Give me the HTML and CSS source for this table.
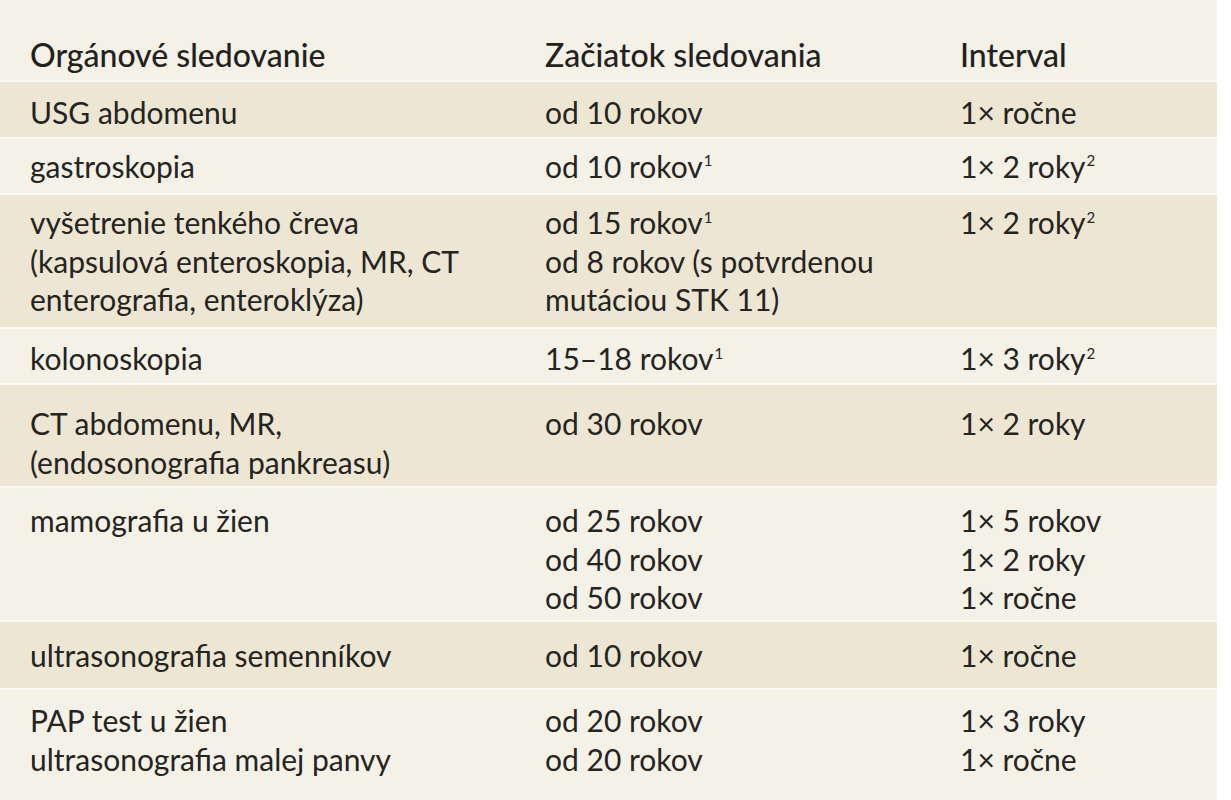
FILE: index.html
```html
<!DOCTYPE html>
<html lang="sk">
<head>
<meta charset="utf-8">
<title>Orgánové sledovanie</title>
<link rel="stylesheet" href="styles.css">
</head>
<body>
<div class="sheet">
<table class="plan">
  <colgroup>
    <col class="c1"><col class="c2"><col class="c3">
  </colgroup>
  <thead>
    <tr class="head">
      <th>Orgánové sledovanie</th>
      <th>Začiatok sledovania</th>
      <th>Interval</th>
    </tr>
  </thead>
  <tbody>
    <tr class="dark low">
      <td>USG abdomenu</td>
      <td>od 10 rokov</td>
      <td>1× ročne</td>
    </tr>
    <tr>
      <td>gastroskopia</td>
      <td>od 10 rokov<sup>1</sup></td>
      <td>1× 2 roky<sup>2</sup></td>
    </tr>
    <tr class="dark">
      <td>vyšetrenie tenkého čreva<br>(kapsulová enteroskopia, MR, CT<br>enterografia, enteroklýza)</td>
      <td>od 15 rokov<sup>1</sup><br>od 8 rokov (s potvrdenou<br>mutáciou STK 11)</td>
      <td>1× 2 roky<sup>2</sup></td>
    </tr>
    <tr class="low">
      <td>kolonoskopia</td>
      <td>15–18 rokov<sup>1</sup></td>
      <td>1× 3 roky<sup>2</sup></td>
    </tr>
    <tr class="dark ct">
      <td>CT abdomenu, MR,<br>(endosonografia pankreasu)</td>
      <td>od 30 rokov</td>
      <td>1× 2 roky</td>
    </tr>
    <tr class="mammo">
      <td>mamografia u žien</td>
      <td>od 25 rokov<br>od 40 rokov<br>od 50 rokov</td>
      <td>1× 5 rokov<br>1× 2 roky<br>1× ročne</td>
    </tr>
    <tr class="dark taller">
      <td>ultrasonografia semenníkov</td>
      <td>od 10 rokov</td>
      <td>1× ročne</td>
    </tr>
    <tr class="last">
      <td>PAP test u žien<br>ultrasonografia malej panvy</td>
      <td>od 20 rokov<br>od 20 rokov</td>
      <td>1× 3 roky<br>1× ročne</td>
    </tr>
  </tbody>
</table>
</div>
</body>
</html>
```

FILE: styles.css
```css
html, body {
  margin: 0;
  padding: 0;
  background: #ffffff;
}

.sheet {
  width: 1217px;
  height: 800px;
  background: #f4f1e7;
  overflow: hidden;
}

.plan {
  width: 1217px;
  border-collapse: collapse;
  table-layout: fixed;
  font-family: Lato, "Open Sans", sans-serif;
  font-size: 30px;
  line-height: 38.5px;
  color: #25241f;
}

.c1 { width: 515px; }
.c2 { width: 415px; }
.c3 { width: 287px; }

.plan th,
.plan td {
  text-align: left;
  vertical-align: top;
  padding: 8px 0 8px 30px;
  font-weight: 400;
}

.plan tr {
  border-bottom: 2px solid #fbf9f4;
}

.plan .head th {
  padding-top: 36px;
  padding-bottom: 5.5px;
  font-size: 32px;
  font-weight: 500;
  color: #22211d;
}

.plan .dark {
  background: #ece6d3;
}

.plan .low td {
  padding-top: 10.5px;
  padding-bottom: 5.5px;
}

.plan .ct td {
  padding-top: 19px;
  padding-bottom: 5px;
}

.plan .mammo td {
  padding-top: 13px;
  padding-bottom: 3px;
}

.plan .taller td {
  padding-top: 14px;
  padding-bottom: 14px;
}

.plan .last td {
  padding-top: 11px;
}

.plan .last {
  border-bottom: none;
}

.plan sup {
  font-size: 0.5em;
  line-height: 0;
  vertical-align: 0.75em;
  margin-left: 1px;
}
```
